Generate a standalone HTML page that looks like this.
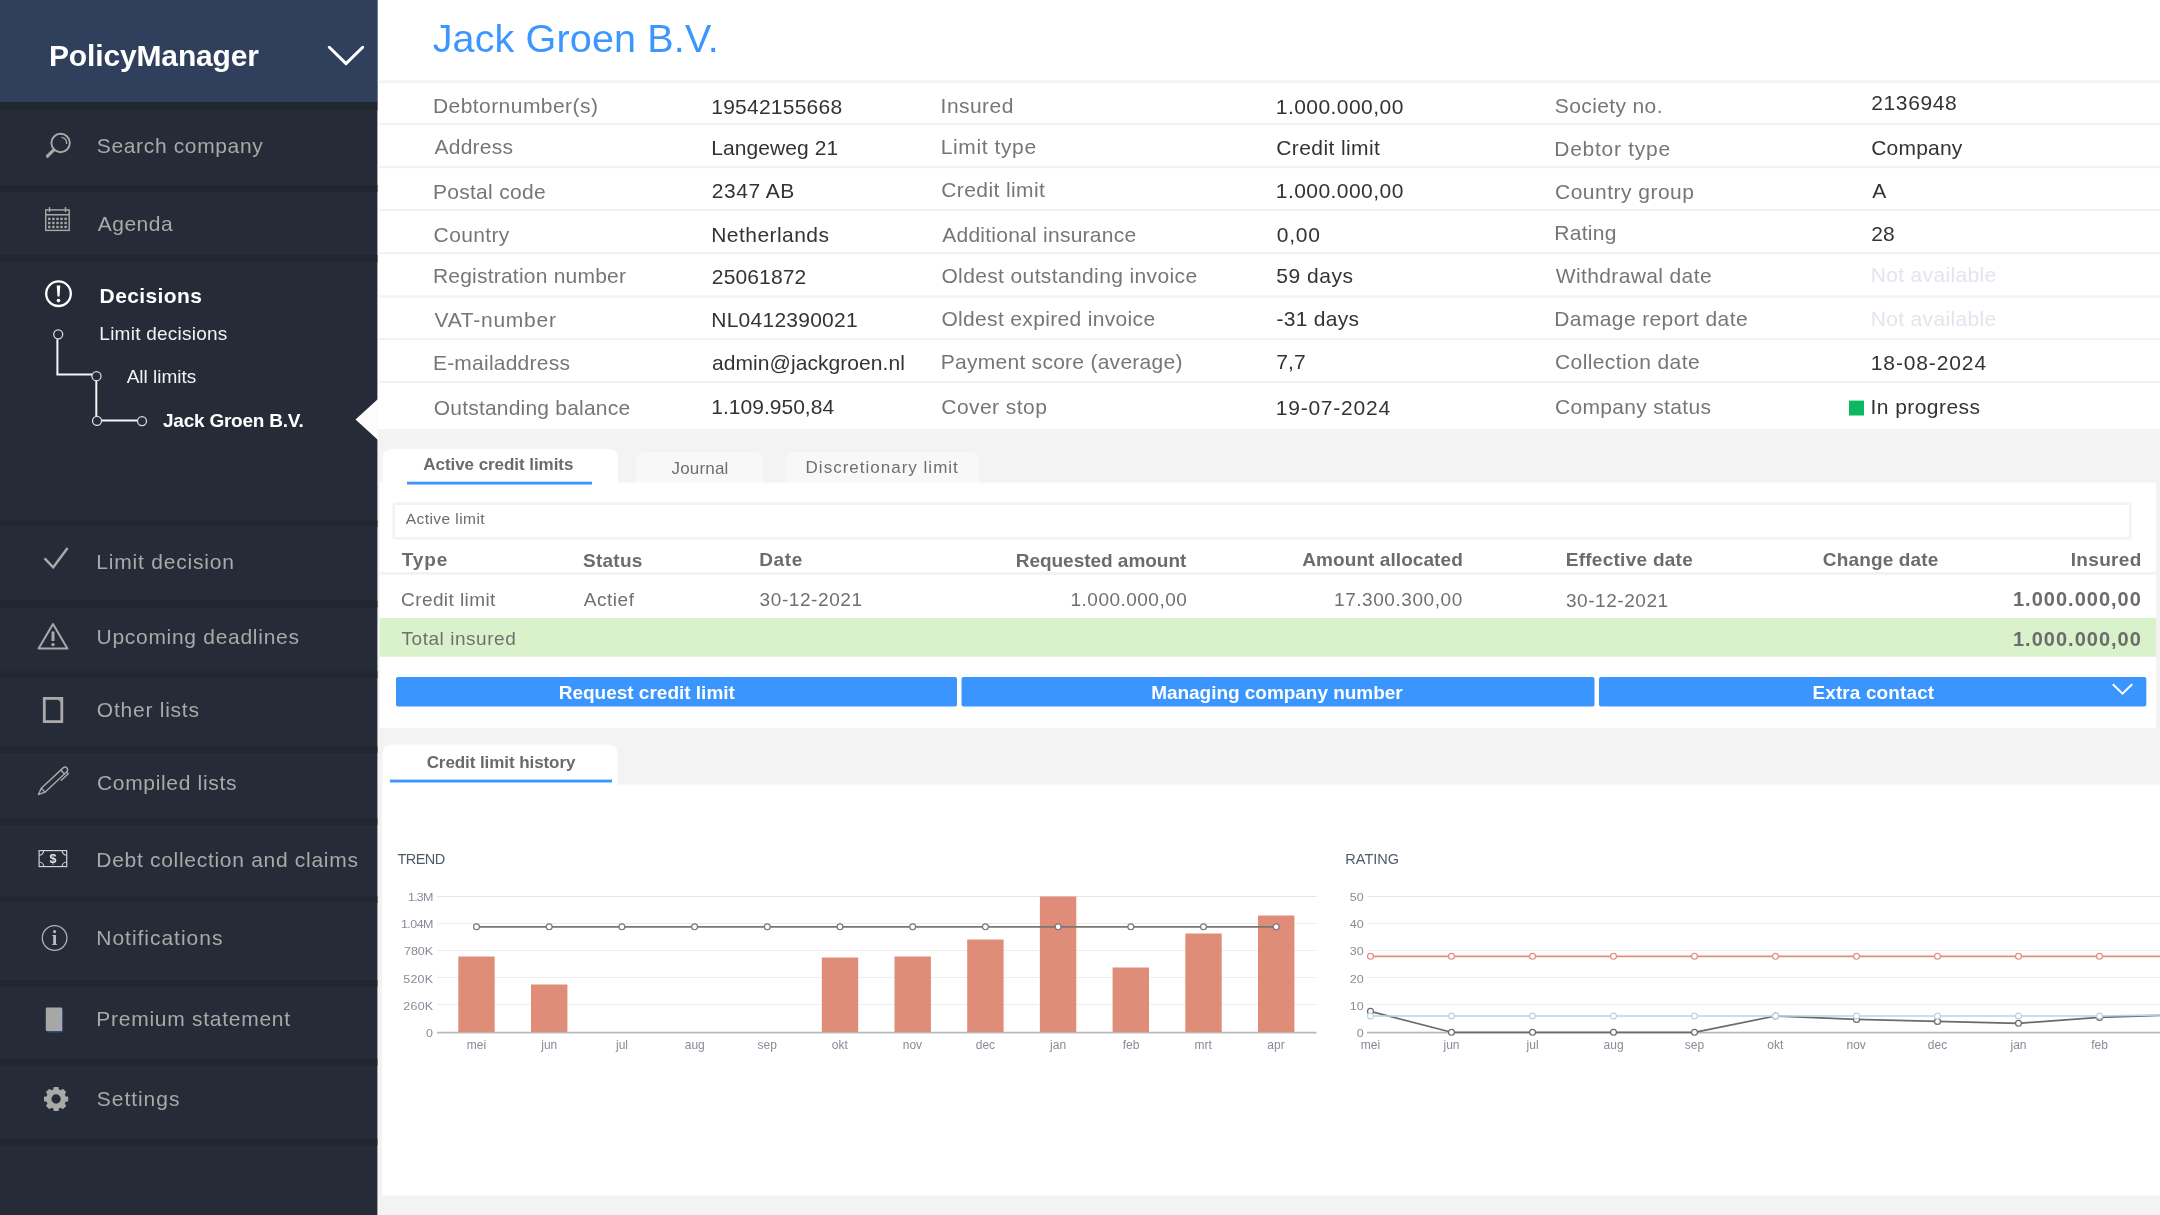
<!DOCTYPE html>
<html lang="en"><head><meta charset="utf-8"><title>PolicyManager - Jack Groen B.V.</title>
<style>
html,body{margin:0;padding:0}
body{width:2160px;height:1215px;position:relative;overflow:hidden;background:#f3f3f3;font-family:"Liberation Sans",sans-serif}
svg.bg{position:absolute;left:0;top:0}
.tl{position:absolute;left:0;top:0;width:2160px;height:1215px;will-change:transform}
.t{position:absolute;white-space:nowrap;line-height:1;font-weight:400}
</style></head><body>
<svg class="bg" width="2160" height="1215" viewBox="0 0 2160 1215">
<rect x="0" y="0" width="2160" height="1215" fill="#f3f3f3" />
<rect x="377.4" y="0" width="1782.6" height="429" fill="#ffffff" />
<rect x="379" y="80.5" width="1781" height="2.7" fill="#f2f2f2" />
<rect x="379" y="123" width="1781" height="2.2" fill="#f2f2f2" />
<rect x="379" y="166" width="1781" height="2.2" fill="#f2f2f2" />
<rect x="379" y="209" width="1781" height="2.2" fill="#f2f2f2" />
<rect x="379" y="252" width="1781" height="2.2" fill="#f2f2f2" />
<rect x="379" y="295.3" width="1781" height="2.2" fill="#f2f2f2" />
<rect x="379" y="338" width="1781" height="2.2" fill="#f2f2f2" />
<rect x="379" y="381" width="1781" height="2.2" fill="#f2f2f2" />
<path d="M382.5 483V459Q382.5 449 392.5 449H608Q618 449 618 459V483Z" fill="#ffffff"/>
<rect x="635.5" y="452" width="127.5" height="36" rx="9" fill="#f8f8f8"/>
<rect x="785.5" y="452" width="193.5" height="36" rx="9" fill="#f8f8f8"/>
<rect x="379.5" y="482.5" width="1776.5" height="245.2" fill="#ffffff" />
<rect x="407" y="481.7" width="185" height="2.8" fill="#3b96ff" />
<rect x="393.7" y="503.7" width="1736.6" height="34.6" rx="2" fill="#fff" stroke="#f2f2f2" stroke-width="2.5"/>
<rect x="379.5" y="572" width="1776.5" height="3" fill="#f3f3f3" />
<rect x="379.5" y="618" width="1776.5" height="38.8" fill="#d9f2cc" />
<rect x="396" y="677" width="561" height="29.5" rx="2" fill="#3a95fe"/>
<rect x="961.5" y="677" width="633" height="29.5" rx="2" fill="#3a95fe"/>
<rect x="1599" y="677" width="547.3" height="29.5" rx="2" fill="#3a95fe"/>
<polyline points="2112.8,684.3 2122.5,693.6 2132.2,684.3" fill="none" stroke="#fff" stroke-width="2"/>
<path d="M382.5 786V754.5Q382.5 744.5 392.5 744.5H607.5Q617.5 744.5 617.5 754.5V786Z" fill="#ffffff"/>
<rect x="382" y="784.5" width="1778" height="411" fill="#ffffff" />
<rect x="390" y="779.6" width="222" height="2.9" fill="#3b96ff" />
<rect x="1849" y="400.6" width="15" height="14.9" fill="#0cb85f" />
<line x1="437" y1="896.5" x2="1316.5" y2="896.5" stroke="#e6e6e8" stroke-width="1"/>
<line x1="437" y1="923.5" x2="1316.5" y2="923.5" stroke="#eeeeef" stroke-width="1"/>
<line x1="437" y1="950.5" x2="1316.5" y2="950.5" stroke="#eeeeef" stroke-width="1"/>
<line x1="437" y1="977.5" x2="1316.5" y2="977.5" stroke="#eeeeef" stroke-width="1"/>
<line x1="437" y1="1004.5" x2="1316.5" y2="1004.5" stroke="#eeeeef" stroke-width="1"/>
<line x1="437" y1="1032.6" x2="1316.5" y2="1032.6" stroke="#b9b9bb" stroke-width="1.6"/>
<rect x="458.3" y="956.5" width="36.4" height="75.5" fill="#df8d78" />
<rect x="531" y="984.5" width="36.4" height="47.5" fill="#df8d78" />
<rect x="821.8" y="957.5" width="36.4" height="74.5" fill="#df8d78" />
<rect x="894.5" y="956.5" width="36.4" height="75.5" fill="#df8d78" />
<rect x="967.2" y="939.5" width="36.4" height="92.5" fill="#df8d78" />
<rect x="1039.9" y="896.5" width="36.4" height="135.5" fill="#df8d78" />
<rect x="1112.6" y="967.5" width="36.4" height="64.5" fill="#df8d78" />
<rect x="1185.3" y="933.5" width="36.4" height="98.5" fill="#df8d78" />
<rect x="1258" y="915.5" width="36.4" height="116.5" fill="#df8d78" />
<polyline points="476.5,926.8 549.2,926.8 621.9,926.8 694.6,926.8 767.3,926.8 840.0,926.8 912.7,926.8 985.4,926.8 1058.1,926.8 1130.8,926.8 1203.5,926.8 1276.2,926.8" fill="none" stroke="#7b7575" stroke-width="1.7" stroke-linejoin="round"/>
<circle cx="476.5" cy="926.8" r="2.95" fill="#fff" stroke="#7b7575" stroke-width="1.2"/>
<circle cx="549.2" cy="926.8" r="2.95" fill="#fff" stroke="#7b7575" stroke-width="1.2"/>
<circle cx="621.9" cy="926.8" r="2.95" fill="#fff" stroke="#7b7575" stroke-width="1.2"/>
<circle cx="694.6" cy="926.8" r="2.95" fill="#fff" stroke="#7b7575" stroke-width="1.2"/>
<circle cx="767.3" cy="926.8" r="2.95" fill="#fff" stroke="#7b7575" stroke-width="1.2"/>
<circle cx="840.0" cy="926.8" r="2.95" fill="#fff" stroke="#7b7575" stroke-width="1.2"/>
<circle cx="912.7" cy="926.8" r="2.95" fill="#fff" stroke="#7b7575" stroke-width="1.2"/>
<circle cx="985.4" cy="926.8" r="2.95" fill="#fff" stroke="#7b7575" stroke-width="1.2"/>
<circle cx="1058.1" cy="926.8" r="2.95" fill="#fff" stroke="#7b7575" stroke-width="1.2"/>
<circle cx="1130.8" cy="926.8" r="2.95" fill="#fff" stroke="#7b7575" stroke-width="1.2"/>
<circle cx="1203.5" cy="926.8" r="2.95" fill="#fff" stroke="#7b7575" stroke-width="1.2"/>
<circle cx="1276.2" cy="926.8" r="2.95" fill="#fff" stroke="#7b7575" stroke-width="1.2"/>
<line x1="1367" y1="896.5" x2="2160" y2="896.5" stroke="#e6e6e8" stroke-width="1"/>
<line x1="1367" y1="923.5" x2="2160" y2="923.5" stroke="#eeeeef" stroke-width="1"/>
<line x1="1367" y1="950.5" x2="2160" y2="950.5" stroke="#eeeeef" stroke-width="1"/>
<line x1="1367" y1="977.5" x2="2160" y2="977.5" stroke="#eeeeef" stroke-width="1"/>
<line x1="1367" y1="1004.5" x2="2160" y2="1004.5" stroke="#eeeeef" stroke-width="1"/>
<line x1="1367" y1="1032.6" x2="2160" y2="1032.6" stroke="#b9b9bb" stroke-width="1.6"/>
<polyline points="1370.5,956.3 1451.5,956.3 1532.5,956.3 1613.5,956.3 1694.5,956.3 1775.5,956.3 1856.5,956.3 1937.5,956.3 2018.5,956.3 2099.5,956.3 2180.5,956.3" fill="none" stroke="#e08e79" stroke-width="1.7" stroke-linejoin="round"/>
<circle cx="1370.5" cy="956.3" r="2.95" fill="#fff" stroke="#e08e79" stroke-width="1.2"/>
<circle cx="1451.5" cy="956.3" r="2.95" fill="#fff" stroke="#e08e79" stroke-width="1.2"/>
<circle cx="1532.5" cy="956.3" r="2.95" fill="#fff" stroke="#e08e79" stroke-width="1.2"/>
<circle cx="1613.5" cy="956.3" r="2.95" fill="#fff" stroke="#e08e79" stroke-width="1.2"/>
<circle cx="1694.5" cy="956.3" r="2.95" fill="#fff" stroke="#e08e79" stroke-width="1.2"/>
<circle cx="1775.5" cy="956.3" r="2.95" fill="#fff" stroke="#e08e79" stroke-width="1.2"/>
<circle cx="1856.5" cy="956.3" r="2.95" fill="#fff" stroke="#e08e79" stroke-width="1.2"/>
<circle cx="1937.5" cy="956.3" r="2.95" fill="#fff" stroke="#e08e79" stroke-width="1.2"/>
<circle cx="2018.5" cy="956.3" r="2.95" fill="#fff" stroke="#e08e79" stroke-width="1.2"/>
<circle cx="2099.5" cy="956.3" r="2.95" fill="#fff" stroke="#e08e79" stroke-width="1.2"/>
<circle cx="2180.5" cy="956.3" r="2.95" fill="#fff" stroke="#e08e79" stroke-width="1.2"/>
<polyline points="1370.5,1011.4 1451.5,1032.3 1532.5,1032.3 1613.5,1032.3 1694.5,1032.3 1775.5,1016.0 1856.5,1019.4 1937.5,1021.4 2018.5,1023.3 2099.5,1017.4 2180.5,1014.6" fill="none" stroke="#6f6868" stroke-width="1.7" stroke-linejoin="round"/>
<circle cx="1370.5" cy="1011.4" r="2.95" fill="#fff" stroke="#6f6868" stroke-width="1.2"/>
<circle cx="1451.5" cy="1032.3" r="2.95" fill="#fff" stroke="#6f6868" stroke-width="1.2"/>
<circle cx="1532.5" cy="1032.3" r="2.95" fill="#fff" stroke="#6f6868" stroke-width="1.2"/>
<circle cx="1613.5" cy="1032.3" r="2.95" fill="#fff" stroke="#6f6868" stroke-width="1.2"/>
<circle cx="1694.5" cy="1032.3" r="2.95" fill="#fff" stroke="#6f6868" stroke-width="1.2"/>
<circle cx="1775.5" cy="1016.0" r="2.95" fill="#fff" stroke="#6f6868" stroke-width="1.2"/>
<circle cx="1856.5" cy="1019.4" r="2.95" fill="#fff" stroke="#6f6868" stroke-width="1.2"/>
<circle cx="1937.5" cy="1021.4" r="2.95" fill="#fff" stroke="#6f6868" stroke-width="1.2"/>
<circle cx="2018.5" cy="1023.3" r="2.95" fill="#fff" stroke="#6f6868" stroke-width="1.2"/>
<circle cx="2099.5" cy="1017.4" r="2.95" fill="#fff" stroke="#6f6868" stroke-width="1.2"/>
<circle cx="2180.5" cy="1014.6" r="2.95" fill="#fff" stroke="#6f6868" stroke-width="1.2"/>
<polyline points="1370.5,1016.0 1451.5,1016.0 1532.5,1016.0 1613.5,1016.0 1694.5,1016.0 1775.5,1016.0 1856.5,1016.0 1937.5,1016.0 2018.5,1016.0 2099.5,1016.0 2180.5,1014.6" fill="none" stroke="#b9d5e0" stroke-width="1.7" stroke-linejoin="round"/>
<circle cx="1370.5" cy="1016.0" r="2.95" fill="#fff" stroke="#b9d5e0" stroke-width="1.2"/>
<circle cx="1451.5" cy="1016.0" r="2.95" fill="#fff" stroke="#b9d5e0" stroke-width="1.2"/>
<circle cx="1532.5" cy="1016.0" r="2.95" fill="#fff" stroke="#b9d5e0" stroke-width="1.2"/>
<circle cx="1613.5" cy="1016.0" r="2.95" fill="#fff" stroke="#b9d5e0" stroke-width="1.2"/>
<circle cx="1694.5" cy="1016.0" r="2.95" fill="#fff" stroke="#b9d5e0" stroke-width="1.2"/>
<circle cx="1775.5" cy="1016.0" r="2.95" fill="#fff" stroke="#b9d5e0" stroke-width="1.2"/>
<circle cx="1856.5" cy="1016.0" r="2.95" fill="#fff" stroke="#b9d5e0" stroke-width="1.2"/>
<circle cx="1937.5" cy="1016.0" r="2.95" fill="#fff" stroke="#b9d5e0" stroke-width="1.2"/>
<circle cx="2018.5" cy="1016.0" r="2.95" fill="#fff" stroke="#b9d5e0" stroke-width="1.2"/>
<circle cx="2099.5" cy="1016.0" r="2.95" fill="#fff" stroke="#b9d5e0" stroke-width="1.2"/>
<circle cx="2180.5" cy="1014.6" r="2.95" fill="#fff" stroke="#b9d5e0" stroke-width="1.2"/>
<rect x="0" y="0" width="377.4" height="1215" fill="#262c37" />
<rect x="0" y="0" width="377.4" height="102" fill="#2f3f5c" />
<rect x="0" y="102" width="377.4" height="8" fill="#212731" />
<rect x="0" y="185" width="377.4" height="7" fill="#212731" />
<rect x="0" y="255" width="377.4" height="7" fill="#212731" />
<rect x="0" y="520.4" width="377.4" height="6.6" fill="#212731" />
<rect x="0" y="600.8" width="377.4" height="6.8" fill="#212731" />
<rect x="0" y="671.3" width="377.4" height="6.7" fill="#212731" />
<rect x="0" y="746.2" width="377.4" height="6.6" fill="#212731" />
<rect x="0" y="818.2" width="377.4" height="6.6" fill="#212731" />
<rect x="0" y="896.3" width="377.4" height="6.6" fill="#212731" />
<rect x="0" y="979.9" width="377.4" height="6.6" fill="#212731" />
<rect x="0" y="1058.8" width="377.4" height="6.7" fill="#212731" />
<rect x="0" y="1138.8" width="377.4" height="6.5" fill="#212731" />
<polygon points="378,399 355.5,419.5 378,440" fill="#fcfcfc"/>
<polyline points="329.3,47.3 346,63.6 362.7,47.3" fill="none" stroke="#fff" stroke-width="3" stroke-linecap="round" stroke-linejoin="round"/>
<g fill="none" stroke="#f6f6f6" stroke-width="2"><path d="M57.4 339.3V374.4H92"/><path d="M96.3 381V416"/><path d="M101.8 420.5H137.3"/></g><g fill="none" stroke="#dedede" stroke-width="1.25"><circle cx="58.2" cy="334.3" r="4.5"/><circle cx="96.5" cy="376.2" r="4.5"/><circle cx="97" cy="420.8" r="4.5"/><circle cx="142" cy="421.1" r="4.5"/></g>
<g fill="none" stroke="#a9a9a9" stroke-linecap="round"><circle cx="60.6" cy="143" r="9.2" stroke-width="1.9"/><path d="M53.8 149.9L47.5 156.2" stroke-width="3.2"/><path d="M62 137.4A6 6 0 0 1 66.6 143.4" stroke-width="1.3"/></g>
<g fill="none" stroke="#a9a9a9" stroke-width="1.4"><rect x="45.7" y="209.9" width="23.5" height="20.5"/><path d="M45.7 214.8H69.2M49.5 207V212M65.5 207V212"/></g><g fill="#a9a9a9"><rect x="48.1" y="217.7" width="2.4" height="2.4"/><rect x="52.2" y="217.7" width="2.4" height="2.4"/><rect x="56.3" y="217.7" width="2.4" height="2.4"/><rect x="60.3" y="217.7" width="2.4" height="2.4"/><rect x="64.4" y="217.7" width="2.4" height="2.4"/><rect x="48.1" y="221.8" width="2.4" height="2.4"/><rect x="52.2" y="221.8" width="2.4" height="2.4"/><rect x="56.3" y="221.8" width="2.4" height="2.4"/><rect x="60.3" y="221.8" width="2.4" height="2.4"/><rect x="64.4" y="221.8" width="2.4" height="2.4"/><rect x="48.1" y="225.8" width="2.4" height="2.4"/><rect x="52.2" y="225.8" width="2.4" height="2.4"/><rect x="56.3" y="225.8" width="2.4" height="2.4"/><rect x="60.3" y="225.8" width="2.4" height="2.4"/><rect x="64.4" y="225.8" width="2.4" height="2.4"/></g>
<circle cx="58.5" cy="293.7" r="12.3" fill="none" stroke="#fff" stroke-width="2.3"/><path d="M56.7 285.6H60.3L59.5 296.6H57.5Z" fill="#fff"/><circle cx="58.5" cy="300.6" r="1.8" fill="#fff"/>
<polyline points="44.6,558.4 53.2,567.3 67.6,548" fill="none" stroke="#a9a9a9" stroke-width="2.4"/>
<g fill="none" stroke="#a9a9a9"><path d="M53 624L67.4 648.6H38.6Z" stroke-width="2" stroke-linejoin="round"/><path d="M53 631.5V641" stroke-width="3" /></g><circle cx="53" cy="644.6" r="1.7" fill="#a9a9a9"/>
<rect x="44.3" y="698.4" width="17.5" height="23.2" fill="none" stroke="#a9a9a9" stroke-width="2.8"/><path d="M56.6 699.6H60.6V703.9Q60.3 700.2 56.6 699.6Z" fill="#a9a9a9"/>
<g transform="translate(38.4,794.6) rotate(-43)" fill="none" stroke="#a9a9a9" stroke-width="1.4" stroke-linejoin="round" stroke-linecap="round"><path d="M0 0L6.5 -2.7H36.3A2.7 2.7 0 0 1 36.3 2.7H6.5Z"/><path d="M6.5 -2.7V2.7M33.2 -2.7V2.7"/><path d="M36 2.9V5.2H26.5"/></g>
<g fill="none" stroke="#d6d6d6" stroke-width="1.15"><rect x="39.1" y="850.6" width="27.6" height="16"/><path d="M39.1 855.2A4.6 4.6 0 0 0 43.7 850.6M62.1 850.6A4.6 4.6 0 0 0 66.7 855.2M66.7 862A4.6 4.6 0 0 0 62.1 866.6M43.7 866.6A4.6 4.6 0 0 0 39.1 862"/></g>
<circle cx="54.6" cy="938" r="12.3" fill="none" stroke="#b4b4b4" stroke-width="1.25"/>
<rect x="46.9" y="1008.6" width="16.2" height="23.8" rx="1.3" fill="#3a4a78"/><rect x="45.8" y="1007.5" width="16.3" height="23.5" rx="1.1" fill="#a7a7a7"/>
<path d="M67.46 1097.20L67.46 1100.80L65.06 1101.08L63.91 1103.87L65.40 1105.76L62.86 1108.30L60.97 1106.81L58.18 1107.96L57.90 1110.36L54.30 1110.36L54.02 1107.96L51.23 1106.81L49.34 1108.30L46.80 1105.76L48.29 1103.87L47.14 1101.08L44.74 1100.80L44.74 1097.20L47.14 1096.92L48.29 1094.13L46.80 1092.24L49.34 1089.70L51.23 1091.19L54.02 1090.04L54.30 1087.64L57.90 1087.64L58.18 1090.04L60.97 1091.19L62.86 1089.70L65.40 1092.24L63.91 1094.13L65.06 1096.92ZM61.50 1099.00A5.4 5.4 0 1 0 50.70 1099.00A5.4 5.4 0 1 0 61.50 1099.00Z" fill="#a9a9a9" fill-rule="evenodd" stroke="#a9a9a9" stroke-width="1.5" stroke-linejoin="round"/>
</svg>
<div class="tl">
<div class="t" style="left:49.00px;top:40.50px;font-size:30px;color:#ffffff;font-weight:700;letter-spacing:-0.144px">PolicyManager</div>
<div class="t" style="left:96.80px;top:135.00px;font-size:21px;color:#a9a9a9;letter-spacing:0.645px">Search company</div>
<div class="t" style="left:97.67px;top:213.00px;font-size:21px;color:#a9a9a9;letter-spacing:0.526px">Agenda</div>
<div class="t" style="left:99.58px;top:284.50px;font-size:21px;color:#ffffff;font-weight:700;letter-spacing:0.396px">Decisions</div>
<div class="t" style="left:99.35px;top:324.00px;font-size:19px;color:#f2f2f2;letter-spacing:0.237px">Limit decisions</div>
<div class="t" style="left:126.69px;top:367.00px;font-size:19px;color:#f2f2f2;letter-spacing:-0.008px">All limits</div>
<div class="t" style="left:162.95px;top:410.50px;font-size:19px;color:#ffffff;font-weight:700;letter-spacing:-0.219px">Jack Groen B.V.</div>
<div class="t" style="left:96.28px;top:551.20px;font-size:21px;color:#a9a9a9;letter-spacing:0.795px">Limit decision</div>
<div class="t" style="left:96.50px;top:626.00px;font-size:21px;color:#a9a9a9;letter-spacing:0.714px">Upcoming deadlines</div>
<div class="t" style="left:96.87px;top:699.00px;font-size:21px;color:#a9a9a9;letter-spacing:0.753px">Other lists</div>
<div class="t" style="left:97.00px;top:772.00px;font-size:21px;color:#a9a9a9;letter-spacing:0.668px">Compiled lists</div>
<div class="t" style="left:96.28px;top:849.00px;font-size:21px;color:#a9a9a9;letter-spacing:0.708px">Debt collection and claims</div>
<div class="t" style="left:96.28px;top:926.60px;font-size:21px;color:#a9a9a9;letter-spacing:0.978px">Notifications</div>
<div class="t" style="left:96.28px;top:1008.00px;font-size:21px;color:#a9a9a9;letter-spacing:0.737px">Premium statement</div>
<div class="t" style="left:96.80px;top:1088.00px;font-size:21px;color:#a9a9a9;letter-spacing:0.960px">Settings</div>
<div class="t" style="left:432.65px;top:19.00px;font-size:39.5px;color:#3b96ff;letter-spacing:0.153px">Jack Groen B.V.</div>
<div class="t" style="left:432.90px;top:95.00px;font-size:21px;color:#767676;letter-spacing:0.450px">Debtornumber(s)</div>
<div class="t" style="left:434.53px;top:136.00px;font-size:21px;color:#767676;letter-spacing:0.226px">Address</div>
<div class="t" style="left:432.90px;top:180.50px;font-size:21px;color:#767676;letter-spacing:0.294px">Postal code</div>
<div class="t" style="left:433.62px;top:223.50px;font-size:21px;color:#767676;letter-spacing:0.359px">Country</div>
<div class="t" style="left:432.90px;top:264.50px;font-size:21px;color:#767676;letter-spacing:0.221px">Registration number</div>
<div class="t" style="left:434.45px;top:308.50px;font-size:21px;color:#767676;letter-spacing:0.751px">VAT-number</div>
<div class="t" style="left:432.90px;top:352.00px;font-size:21px;color:#767676;letter-spacing:0.234px">E-mailaddress</div>
<div class="t" style="left:433.74px;top:397.00px;font-size:21px;color:#767676;letter-spacing:0.207px">Outstanding balance</div>
<div class="t" style="left:711.29px;top:96.00px;font-size:21px;color:#333333;letter-spacing:0.235px">19542155668</div>
<div class="t" style="left:711.28px;top:137.00px;font-size:21px;color:#333333;letter-spacing:0.076px">Langeweg 21</div>
<div class="t" style="left:711.84px;top:179.50px;font-size:21px;color:#333333;letter-spacing:0.508px">2347 AB</div>
<div class="t" style="left:711.28px;top:223.50px;font-size:21px;color:#333333;letter-spacing:0.441px">Netherlands</div>
<div class="t" style="left:711.84px;top:265.50px;font-size:21px;color:#333333;letter-spacing:0.134px">25061872</div>
<div class="t" style="left:711.28px;top:308.50px;font-size:21px;color:#333333;letter-spacing:0.246px">NL0412390021</div>
<div class="t" style="left:712.00px;top:352.00px;font-size:21px;color:#333333;letter-spacing:0.069px">admin@jackgroen.nl</div>
<div class="t" style="left:711.29px;top:396.00px;font-size:21px;color:#333333;letter-spacing:0.015px">1.109.950,84</div>
<div class="t" style="left:940.60px;top:95.00px;font-size:21px;color:#767676;letter-spacing:0.458px">Insured</div>
<div class="t" style="left:940.78px;top:136.00px;font-size:21px;color:#767676;letter-spacing:0.606px">Limit type</div>
<div class="t" style="left:941.27px;top:179.00px;font-size:21px;color:#767676;letter-spacing:0.400px">Credit limit</div>
<div class="t" style="left:942.23px;top:223.50px;font-size:21px;color:#767676;letter-spacing:0.250px">Additional insurance</div>
<div class="t" style="left:941.39px;top:264.50px;font-size:21px;color:#767676;letter-spacing:0.376px">Oldest outstanding invoice</div>
<div class="t" style="left:941.39px;top:307.50px;font-size:21px;color:#767676;letter-spacing:0.339px">Oldest expired invoice</div>
<div class="t" style="left:940.78px;top:351.00px;font-size:21px;color:#767676;letter-spacing:0.268px">Payment score (average)</div>
<div class="t" style="left:941.27px;top:395.75px;font-size:21px;color:#767676;letter-spacing:0.458px">Cover stop</div>
<div class="t" style="left:1275.79px;top:96.00px;font-size:21px;color:#333333;letter-spacing:0.448px">1.000.000,00</div>
<div class="t" style="left:1276.27px;top:136.50px;font-size:21px;color:#333333;letter-spacing:0.400px">Credit limit</div>
<div class="t" style="left:1275.79px;top:179.50px;font-size:21px;color:#333333;letter-spacing:0.448px">1.000.000,00</div>
<div class="t" style="left:1276.74px;top:223.50px;font-size:21px;color:#333333;letter-spacing:0.761px">0,00</div>
<div class="t" style="left:1276.25px;top:265.00px;font-size:21px;color:#333333;letter-spacing:0.520px">59 days</div>
<div class="t" style="left:1276.60px;top:307.50px;font-size:21px;color:#333333;letter-spacing:0.254px">-31 days</div>
<div class="t" style="left:1276.33px;top:351.00px;font-size:21px;color:#333333;letter-spacing:0.078px">7,7</div>
<div class="t" style="left:1275.79px;top:397.00px;font-size:21px;color:#333333;letter-spacing:0.763px">19-07-2024</div>
<div class="t" style="left:1554.80px;top:95.00px;font-size:21px;color:#767676;letter-spacing:0.382px">Society no.</div>
<div class="t" style="left:1554.28px;top:138.25px;font-size:21px;color:#767676;letter-spacing:0.727px">Debtor type</div>
<div class="t" style="left:1555.00px;top:180.75px;font-size:21px;color:#767676;letter-spacing:0.488px">Country group</div>
<div class="t" style="left:1554.28px;top:221.50px;font-size:21px;color:#767676;letter-spacing:0.282px">Rating</div>
<div class="t" style="left:1555.70px;top:264.50px;font-size:21px;color:#767676;letter-spacing:0.379px">Withdrawal date</div>
<div class="t" style="left:1554.28px;top:307.50px;font-size:21px;color:#767676;letter-spacing:0.384px">Damage report date</div>
<div class="t" style="left:1555.00px;top:350.75px;font-size:21px;color:#767676;letter-spacing:0.404px">Collection date</div>
<div class="t" style="left:1555.00px;top:395.75px;font-size:21px;color:#767676;letter-spacing:0.322px">Company status</div>
<div class="t" style="left:1871.36px;top:92.00px;font-size:21px;color:#333333;letter-spacing:0.578px">2136948</div>
<div class="t" style="left:1871.27px;top:137.00px;font-size:21px;color:#333333;letter-spacing:0.193px">Company</div>
<div class="t" style="left:1872.23px;top:180.25px;font-size:21px;color:#333333">A</div>
<div class="t" style="left:1871.36px;top:222.50px;font-size:21px;color:#333333">28</div>
<div class="t" style="left:1870.78px;top:263.50px;font-size:21px;color:#e3e5ee;letter-spacing:0.326px">Not available</div>
<div class="t" style="left:1870.78px;top:307.50px;font-size:21px;color:#e3e5ee;letter-spacing:0.326px">Not available</div>
<div class="t" style="left:1870.79px;top:352.00px;font-size:21px;color:#333333;letter-spacing:0.874px">18-08-2024</div>
<div class="t" style="left:1870.60px;top:395.75px;font-size:21px;color:#333333;letter-spacing:0.427px">In progress</div>
<div class="t" style="left:423.29px;top:456.00px;font-size:17px;color:#6a6a6a;font-weight:700;letter-spacing:-0.056px">Active credit limits</div>
<div class="t" style="left:671.53px;top:460.00px;font-size:17px;color:#6e6e6e;letter-spacing:0.167px">Journal</div>
<div class="t" style="left:805.60px;top:459.00px;font-size:17px;color:#6e6e6e;letter-spacing:1.004px">Discretionary limit</div>
<div class="t" style="left:405.68px;top:510.75px;font-size:15.5px;color:#6a6a6a;letter-spacing:0.444px">Active limit</div>
<div class="t" style="left:401.76px;top:549.50px;font-size:19px;color:#6c6c6c;font-weight:700;letter-spacing:0.852px">Type</div>
<div class="t" style="left:582.93px;top:551.20px;font-size:19px;color:#6c6c6c;font-weight:700;letter-spacing:0.288px">Status</div>
<div class="t" style="left:759.21px;top:549.50px;font-size:19px;color:#6c6c6c;font-weight:700;letter-spacing:0.620px">Date</div>
<div class="t" style="left:1015.70px;top:550.50px;font-size:19px;color:#6c6c6c;font-weight:700;letter-spacing:-0.023px">Requested amount</div>
<div class="t" style="left:1302.34px;top:549.50px;font-size:19px;color:#6c6c6c;font-weight:700;letter-spacing:0.067px">Amount allocated</div>
<div class="t" style="left:1565.70px;top:549.50px;font-size:19px;color:#6c6c6c;font-weight:700;letter-spacing:0.273px">Effective date</div>
<div class="t" style="left:1822.87px;top:549.50px;font-size:19px;color:#6c6c6c;font-weight:700;letter-spacing:0.136px">Change date</div>
<div class="t" style="left:2070.71px;top:550.00px;font-size:19px;color:#6c6c6c;font-weight:700;letter-spacing:0.325px">Insured</div>
<div class="t" style="left:401.00px;top:589.50px;font-size:19px;color:#707070;letter-spacing:0.421px">Credit limit</div>
<div class="t" style="left:583.69px;top:589.50px;font-size:19px;color:#707070;letter-spacing:0.553px">Actief</div>
<div class="t" style="left:759.57px;top:589.50px;font-size:19px;color:#707070;letter-spacing:0.590px">30-12-2021</div>
<div class="t" style="left:1070.54px;top:590.00px;font-size:19px;color:#707070;letter-spacing:0.483px">1.000.000,00</div>
<div class="t" style="left:1334.04px;top:590.00px;font-size:19px;color:#707070;letter-spacing:0.557px">17.300.300,00</div>
<div class="t" style="left:1565.97px;top:591.00px;font-size:19px;color:#707070;letter-spacing:0.546px">30-12-2021</div>
<div class="t" style="left:2012.94px;top:588.50px;font-size:20px;color:#6c6c6c;font-weight:700;letter-spacing:1.015px">1.000.000,00</div>
<div class="t" style="left:401.56px;top:628.50px;font-size:19px;color:#707070;letter-spacing:0.537px">Total insured</div>
<div class="t" style="left:2012.94px;top:629.00px;font-size:20px;color:#6c6c6c;font-weight:700;letter-spacing:1.015px">1.000.000,00</div>
<div class="t" style="left:558.70px;top:682.75px;font-size:19px;color:#ffffff;font-weight:700;letter-spacing:-0.007px">Request credit limit</div>
<div class="t" style="left:1151.21px;top:682.75px;font-size:19px;color:#ffffff;font-weight:700;letter-spacing:-0.037px">Managing company number</div>
<div class="t" style="left:1812.47px;top:682.75px;font-size:19px;color:#ffffff;font-weight:700;letter-spacing:0.109px">Extra contact</div>
<div class="t" style="left:426.67px;top:753.50px;font-size:17px;color:#6a6a6a;font-weight:700;letter-spacing:-0.075px">Credit limit history</div>
<div class="t" style="left:397.56px;top:851.50px;font-size:14.5px;color:#4f5a6b;letter-spacing:-0.558px">TREND</div>
<div class="t" style="left:1345.36px;top:851.50px;font-size:14.5px;color:#4f5a6b;letter-spacing:0.014px">RATING</div>
<div class="t" style="left:407.96px;top:891.00px;font-size:12.5px;color:#878c98;letter-spacing:-0.767px;transform:scaleY(0.92);transform-origin:0 10px">1.3M</div>
<div class="t" style="left:400.96px;top:918.00px;font-size:12.5px;color:#878c98;letter-spacing:-0.563px;transform:scaleY(0.92);transform-origin:0 10px">1.04M</div>
<div class="t" style="left:403.99px;top:945.00px;font-size:12.5px;color:#878c98;letter-spacing:-0.013px;transform:scaleY(0.92);transform-origin:0 10px">780K</div>
<div class="t" style="left:403.21px;top:972.50px;font-size:12.5px;color:#878c98;letter-spacing:0.249px;transform:scaleY(0.92);transform-origin:0 10px">520K</div>
<div class="t" style="left:403.35px;top:999.50px;font-size:12.5px;color:#878c98;letter-spacing:0.202px;transform:scaleY(0.92);transform-origin:0 10px">260K</div>
<div class="t" style="left:425.99px;top:1026.50px;font-size:12.5px;color:#878c98;transform:scaleY(0.92);transform-origin:0 10px">0</div>
<div class="t" style="left:1349.79px;top:891.00px;font-size:12.5px;color:#878c98;transform:scaleY(0.92);transform-origin:0 10px">50</div>
<div class="t" style="left:1349.79px;top:918.00px;font-size:12.5px;color:#878c98;transform:scaleY(0.92);transform-origin:0 10px">40</div>
<div class="t" style="left:1349.79px;top:945.00px;font-size:12.5px;color:#878c98;transform:scaleY(0.92);transform-origin:0 10px">30</div>
<div class="t" style="left:1349.79px;top:972.50px;font-size:12.5px;color:#878c98;transform:scaleY(0.92);transform-origin:0 10px">20</div>
<div class="t" style="left:1349.79px;top:999.50px;font-size:12.5px;color:#878c98;transform:scaleY(0.92);transform-origin:0 10px">10</div>
<div class="t" style="left:1356.74px;top:1026.50px;font-size:12.5px;color:#878c98;transform:scaleY(0.92);transform-origin:0 10px">0</div>
<div class="t" style="left:466.86px;top:1038.75px;font-size:12px;color:#878c98">mei</div>
<div class="t" style="left:541.24px;top:1038.75px;font-size:12px;color:#878c98">jun</div>
<div class="t" style="left:615.98px;top:1038.75px;font-size:12px;color:#878c98">jul</div>
<div class="t" style="left:684.75px;top:1038.75px;font-size:12px;color:#878c98">aug</div>
<div class="t" style="left:757.49px;top:1038.75px;font-size:12px;color:#878c98">sep</div>
<div class="t" style="left:831.86px;top:1038.75px;font-size:12px;color:#878c98">okt</div>
<div class="t" style="left:902.78px;top:1038.75px;font-size:12px;color:#878c98">nov</div>
<div class="t" style="left:975.77px;top:1038.75px;font-size:12px;color:#878c98">dec</div>
<div class="t" style="left:1050.07px;top:1038.75px;font-size:12px;color:#878c98">jan</div>
<div class="t" style="left:1122.72px;top:1038.75px;font-size:12px;color:#878c98">feb</div>
<div class="t" style="left:1194.56px;top:1038.75px;font-size:12px;color:#878c98">mrt</div>
<div class="t" style="left:1267.31px;top:1038.75px;font-size:12px;color:#878c98">apr</div>
<div class="t" style="left:1360.86px;top:1038.75px;font-size:12px;color:#878c98">mei</div>
<div class="t" style="left:1443.52px;top:1038.75px;font-size:12px;color:#878c98">jun</div>
<div class="t" style="left:1526.55px;top:1038.75px;font-size:12px;color:#878c98">jul</div>
<div class="t" style="left:1603.57px;top:1038.75px;font-size:12px;color:#878c98">aug</div>
<div class="t" style="left:1684.81px;top:1038.75px;font-size:12px;color:#878c98">sep</div>
<div class="t" style="left:1767.37px;top:1038.75px;font-size:12px;color:#878c98">okt</div>
<div class="t" style="left:1846.51px;top:1038.75px;font-size:12px;color:#878c98">nov</div>
<div class="t" style="left:1927.83px;top:1038.75px;font-size:12px;color:#878c98">dec</div>
<div class="t" style="left:2010.52px;top:1038.75px;font-size:12px;color:#878c98">jan</div>
<div class="t" style="left:2091.25px;top:1038.75px;font-size:12px;color:#878c98">feb</div>
<div class="t" style="left:49.4px;top:852.8px;font-size:12.5px;font-weight:700;color:#e4e4e4">$</div>
<div class="t" style="left:51.8px;top:928.2px;font-size:20px;font-weight:700;color:#b9b9b9;font-family:'Liberation Serif',serif">i</div>
</div>
</body></html>
